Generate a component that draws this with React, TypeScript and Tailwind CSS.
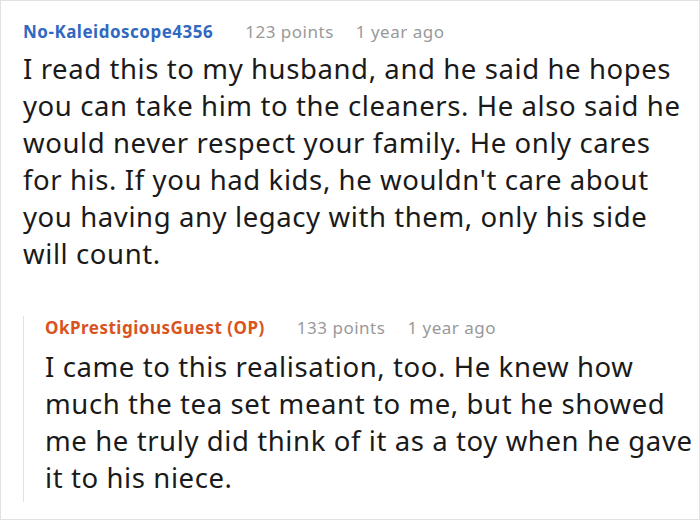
import React from 'react';

interface Comment {
  author: string;
  isOp?: boolean;
  points: number;
  age: string;
  body: string;
}

const parent: Comment = {
  author: 'No-Kaleidoscope4356',
  points: 123,
  age: '1 year ago',
  body:
    "I read this to my husband, and he said he hopes you can take him to the cleaners. He also said he would never respect your family. He only cares for his. If you had kids, he wouldn't care about you having any legacy with them, only his side will count.",
};

const reply: Comment = {
  author: 'OkPrestigiousGuest (OP)',
  isOp: true,
  points: 133,
  age: '1 year ago',
  body:
    'I came to this realisation, too. He knew how much the tea set meant to me, but he showed me he truly did think of it as a toy when he gave it to his niece.',
};

function CommentHeader({ comment }: { comment: Comment }) {
  return (
    <div className="flex items-baseline text-[17px] leading-[24px] tracking-[0.5px]">
      <span
        className={
          comment.isOp ? 'font-bold text-[#d9531e]' : 'font-bold text-[#3168c0]'
        }
      >
        {comment.author}
      </span>
      <span className="ml-[32px] text-[#999999]">{comment.points} points</span>
      <span className="ml-[22px] text-[#999999]">{comment.age}</span>
    </div>
  );
}

export default function App() {
  return (
    <div
      className="w-[700px] h-[520px] bg-white border border-[#e2e2e2] overflow-hidden"
      style={{ fontFamily: '"Noto Sans", sans-serif' }}
    >
      <div className="pl-[22px] pr-[12px] pt-[19px]">
        <CommentHeader comment={parent} />
        <p className="mt-[6px] text-[27.5px] leading-[37px] tracking-[0.6px] text-[#1a1a1a]">
          {parent.body}
        </p>

        {/* reply thread */}
        <div className="mt-[44px] -mr-[10px] border-l border-[#e2e2e2] pl-[21px] pb-[6px]">
          <CommentHeader comment={reply} />
          <p className="mt-[8px] text-[27.5px] leading-[37px] tracking-[0.6px] text-[#1a1a1a]">
            {reply.body}
          </p>
        </div>
      </div>
    </div>
  );
}
